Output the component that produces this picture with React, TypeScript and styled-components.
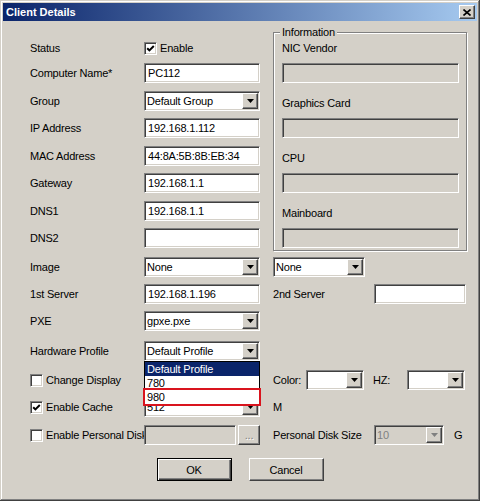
import React from 'react';
import styled, { createGlobalStyle, css } from 'styled-components';

const FACE = '#d4d0c8';

const GlobalStyle = createGlobalStyle`
  html, body {
    margin: 0;
    padding: 0;
    background: ${FACE};
  }
  body {
    font-family: "Liberation Sans", Arial, sans-serif;
    font-size: 11px;
    letter-spacing: -0.2px;
    color: #000;
  }
`;

const sunken = css`
  box-sizing: border-box;
  border: 1px solid;
  border-color: #808080 #ffffff #ffffff #808080;
  box-shadow: inset 1px 1px #404040, inset -1px -1px ${FACE};
`;

const raised = css`
  box-sizing: border-box;
  border: 1px solid;
  border-color: #ffffff #404040 #404040 #ffffff;
  box-shadow: inset -1px -1px #808080, inset 1px 1px ${FACE};
`;

const Window = styled.div`
  box-sizing: border-box;
  width: 480px;
  height: 501px;
  padding: 3px;
  background: ${FACE};
  box-shadow: inset -1px -1px #404040, inset 1px 1px ${FACE},
    inset -2px -2px #808080, inset 2px 2px #ffffff;
  display: flex;
  flex-direction: column;
`;

const TitleBar = styled.div`
  height: 18px;
  padding: 0 2px 0 3px;
  display: flex;
  align-items: center;
  justify-content: space-between;
  background: linear-gradient(to right, #0a246a, #a6caf0);
`;

const Title = styled.span`
  color: #fff;
  font-weight: bold;
  letter-spacing: 0;
`;

const CloseButton = styled.div`
  ${raised};
  width: 16px;
  height: 14px;
  background: ${FACE};
  display: flex;
  align-items: center;
  justify-content: center;
`;

const Body = styled.div`
  flex: 1;
  padding-top: 17px;
  display: flex;
  flex-direction: column;
`;

const Form = styled.div`
  margin-left: 27px;
  display: grid;
  grid-template-columns: 114px 129px 194px;
  grid-template-rows: 25px 28px 27px 28px 27px 28px 27px 29px 27px 27px 30px 29px 27px 28px 20px;
  align-items: start;
`;

const LabelCell = styled.div`
  grid-column: 1;
  height: 20px;
  display: flex;
  align-items: center;
  white-space: nowrap;
  overflow: hidden;
`;

const FieldCell = styled.div<{ $gap?: number }>`
  grid-column: 2;
  position: relative;
  height: 20px;
  display: flex;
  align-items: center;
  gap: ${(p) => p.$gap ?? 0}px;
`;

const SideCell = styled.div`
  grid-column: 3;
  height: 20px;
  display: flex;
  align-items: center;
  white-space: nowrap;
`;

const SideLabel = styled.span<{ $w?: number; $ml?: number }>`
  width: ${(p) => (p.$w ? `${p.$w}px` : 'auto')};
  margin-left: ${(p) => p.$ml ?? 0}px;
  flex-shrink: 0;
`;

const TextBox = styled.div<{ $w?: number; $disabled?: boolean }>`
  ${sunken};
  width: ${(p) => p.$w ?? 116}px;
  height: 20px;
  padding: 0 3px;
  background: ${(p) => (p.$disabled ? FACE : '#fff')};
  line-height: 18px;
  white-space: nowrap;
  overflow: hidden;
  flex-shrink: 0;
`;

const SelectBox = styled.div<{ $w?: number; $disabled?: boolean }>`
  ${sunken};
  width: ${(p) => p.$w ?? 116}px;
  height: 20px;
  padding: 1px;
  background: ${(p) => (p.$disabled ? FACE : '#fff')};
  color: ${(p) => (p.$disabled ? '#808080' : '#000')};
  display: flex;
  align-items: center;
  flex-shrink: 0;
`;

const SelectText = styled.span`
  flex: 1;
  padding-left: 1px;
  white-space: nowrap;
  overflow: hidden;
`;

const DropButton = styled.span`
  ${raised};
  width: 16px;
  height: 16px;
  background: ${FACE};
  display: flex;
  align-items: center;
  justify-content: center;
  flex-shrink: 0;
`;

const DropList = styled.div`
  position: absolute;
  top: 20px;
  left: 0;
  z-index: 5;
  box-sizing: border-box;
  width: 116px;
  border: 1px solid #000;
  background: #fff;
`;

const Option = styled.div<{ $selected?: boolean; $marked?: boolean }>`
  height: 14px;
  line-height: 14px;
  padding-left: 2px;
  background: ${(p) => (p.$selected ? '#0a246a' : '#fff')};
  color: ${(p) => (p.$selected ? '#fff' : '#000')};
  ${(p) =>
    p.$marked &&
    css`
      outline: 2px solid #d9141e;
    `}
`;

const CheckRow = styled.label`
  display: flex;
  align-items: center;
  gap: 3px;
  white-space: nowrap;
`;

const CheckBox = styled.span`
  ${sunken};
  width: 13px;
  height: 13px;
  background: #fff;
  display: inline-flex;
  align-items: center;
  justify-content: center;
  flex-shrink: 0;
`;

const InfoGroup = styled.div`
  grid-column: 3;
  grid-row: 1 / span 8;
  position: relative;
  box-sizing: border-box;
  margin-top: -6px;
  width: 194px;
  height: 219px;
  border: 1px solid #808080;
  box-shadow: inset 1px 1px #fff, 1px 1px #fff;
  padding: 8px 7px 0 8px;
  display: flex;
  flex-direction: column;
`;

const Legend = styled.span`
  position: absolute;
  top: -8px;
  left: 6px;
  padding: 0 2px;
  line-height: 14px;
  background: ${FACE};
`;

const InfoLabel = styled.div`
  flex-shrink: 0;
  line-height: 14px;
  margin-bottom: 8px;
`;

const InfoField = styled.div`
  ${sunken};
  flex-shrink: 0;
  width: 177px;
  height: 20px;
  margin-bottom: 13px;
  background: ${FACE};
`;

const SmallButton = styled.div`
  ${raised};
  width: 22px;
  height: 20px;
  background: ${FACE};
  color: #808080;
  text-shadow: 1px 1px #fff;
  display: flex;
  align-items: center;
  justify-content: center;
  line-height: 1;
`;

const ButtonBar = styled.div`
  margin-top: 13px;
  display: flex;
  justify-content: center;
  gap: 17px;
`;

const PushButton = styled.button<{ $default?: boolean }>`
  ${raised};
  width: 75px;
  height: 23px;
  padding: 0;
  background: ${FACE};
  font: inherit;
  letter-spacing: inherit;
  color: #000;
  ${(p) =>
    p.$default &&
    css`
      border: 1px solid #000;
      box-shadow: inset 1px 1px #fff, inset -1px -1px #404040,
        inset -2px -2px #808080;
    `}
`;

const Arrow = ({ disabled }: { disabled?: boolean }) => (
  <svg width="7" height="4" viewBox="0 0 7 4">
    <polygon points="0,0 7,0 3.5,4" fill={disabled ? '#808080' : '#000'} />
  </svg>
);

const Check = () => (
  <svg width="9" height="9" viewBox="0 0 9 9">
    <path d="M1.2 4.2 L3.4 6.4 L7.8 2" stroke="#000" strokeWidth="2" fill="none" />
  </svg>
);

const Select = ({
  value,
  w,
  disabled,
}: {
  value?: string;
  w?: number;
  disabled?: boolean;
}) => (
  <SelectBox $w={w} $disabled={disabled}>
    <SelectText>{value}</SelectText>
    <DropButton>
      <Arrow disabled={disabled} />
    </DropButton>
  </SelectBox>
);

const CheckItem = ({ label, checked }: { label: string; checked?: boolean }) => (
  <CheckRow>
    <CheckBox>{checked && <Check />}</CheckBox>
    {label}
  </CheckRow>
);

const infoItems = ['NIC Vendor', 'Graphics Card', 'CPU', 'Mainboard'];

const App: React.FC = () => (
  <>
    <GlobalStyle />
    <Window>
      <TitleBar>
        <Title>Client Details</Title>
        <CloseButton>
          <svg width="8" height="7" viewBox="0 0 8 7">
            <path d="M0.5 0.5 L7.5 6.5 M7.5 0.5 L0.5 6.5" stroke="#000" strokeWidth="1.6" />
          </svg>
        </CloseButton>
      </TitleBar>
      <Body>
        <Form>
          <InfoGroup>
            <Legend>Information</Legend>
            {infoItems.map((item) => (
              <React.Fragment key={item}>
                <InfoLabel>{item}</InfoLabel>
                <InfoField />
              </React.Fragment>
            ))}
          </InfoGroup>

          <LabelCell>Status</LabelCell>
          <FieldCell>
            <CheckItem label="Enable" checked />
          </FieldCell>

          <LabelCell>Computer Name*</LabelCell>
          <FieldCell>
            <TextBox>PC112</TextBox>
          </FieldCell>

          <LabelCell>Group</LabelCell>
          <FieldCell>
            <Select value="Default Group" />
          </FieldCell>

          <LabelCell>IP Address</LabelCell>
          <FieldCell>
            <TextBox>192.168.1.112</TextBox>
          </FieldCell>

          <LabelCell>MAC Address</LabelCell>
          <FieldCell>
            <TextBox>44:8A:5B:8B:EB:34</TextBox>
          </FieldCell>

          <LabelCell>Gateway</LabelCell>
          <FieldCell>
            <TextBox>192.168.1.1</TextBox>
          </FieldCell>

          <LabelCell>DNS1</LabelCell>
          <FieldCell>
            <TextBox>192.168.1.1</TextBox>
          </FieldCell>

          <LabelCell>DNS2</LabelCell>
          <FieldCell>
            <TextBox />
          </FieldCell>

          <LabelCell>Image</LabelCell>
          <FieldCell>
            <Select value="None" />
          </FieldCell>
          <SideCell>
            <Select value="None" w={92} />
          </SideCell>

          <LabelCell>1st Server</LabelCell>
          <FieldCell>
            <TextBox>192.168.1.196</TextBox>
          </FieldCell>
          <SideCell>
            <SideLabel $w={101}>2nd Server</SideLabel>
            <TextBox $w={92} />
          </SideCell>

          <LabelCell>PXE</LabelCell>
          <FieldCell>
            <Select value="gpxe.pxe" />
          </FieldCell>

          <LabelCell>Hardware Profile</LabelCell>
          <FieldCell>
            <Select value="Default Profile" />
            <DropList>
              <Option $selected>Default Profile</Option>
              <Option>780</Option>
              <Option $marked>980</Option>
            </DropList>
          </FieldCell>

          <LabelCell>
            <CheckItem label="Change Display" />
          </LabelCell>
          <SideCell>
            <SideLabel $w={33}>Color:</SideLabel>
            <Select w={58} />
            <SideLabel $w={34} $ml={9}>
              HZ:
            </SideLabel>
            <Select w={58} />
          </SideCell>

          <LabelCell>
            <CheckItem label="Enable Cache" checked />
          </LabelCell>
          <FieldCell>
            <Select value="512" />
          </FieldCell>
          <SideCell>M</SideCell>

          <LabelCell>
            <CheckItem label="Enable Personal Disk" />
          </LabelCell>
          <FieldCell $gap={2}>
            <TextBox $w={92} $disabled />
            <SmallButton>...</SmallButton>
          </FieldCell>
          <SideCell>
            <SideLabel $w={101}>Personal Disk Size</SideLabel>
            <Select value="10" w={70} disabled />
            <SideLabel $ml={10}>G</SideLabel>
          </SideCell>
        </Form>
        <ButtonBar>
          <PushButton $default>OK</PushButton>
          <PushButton>Cancel</PushButton>
        </ButtonBar>
      </Body>
    </Window>
  </>
);

export default App;
